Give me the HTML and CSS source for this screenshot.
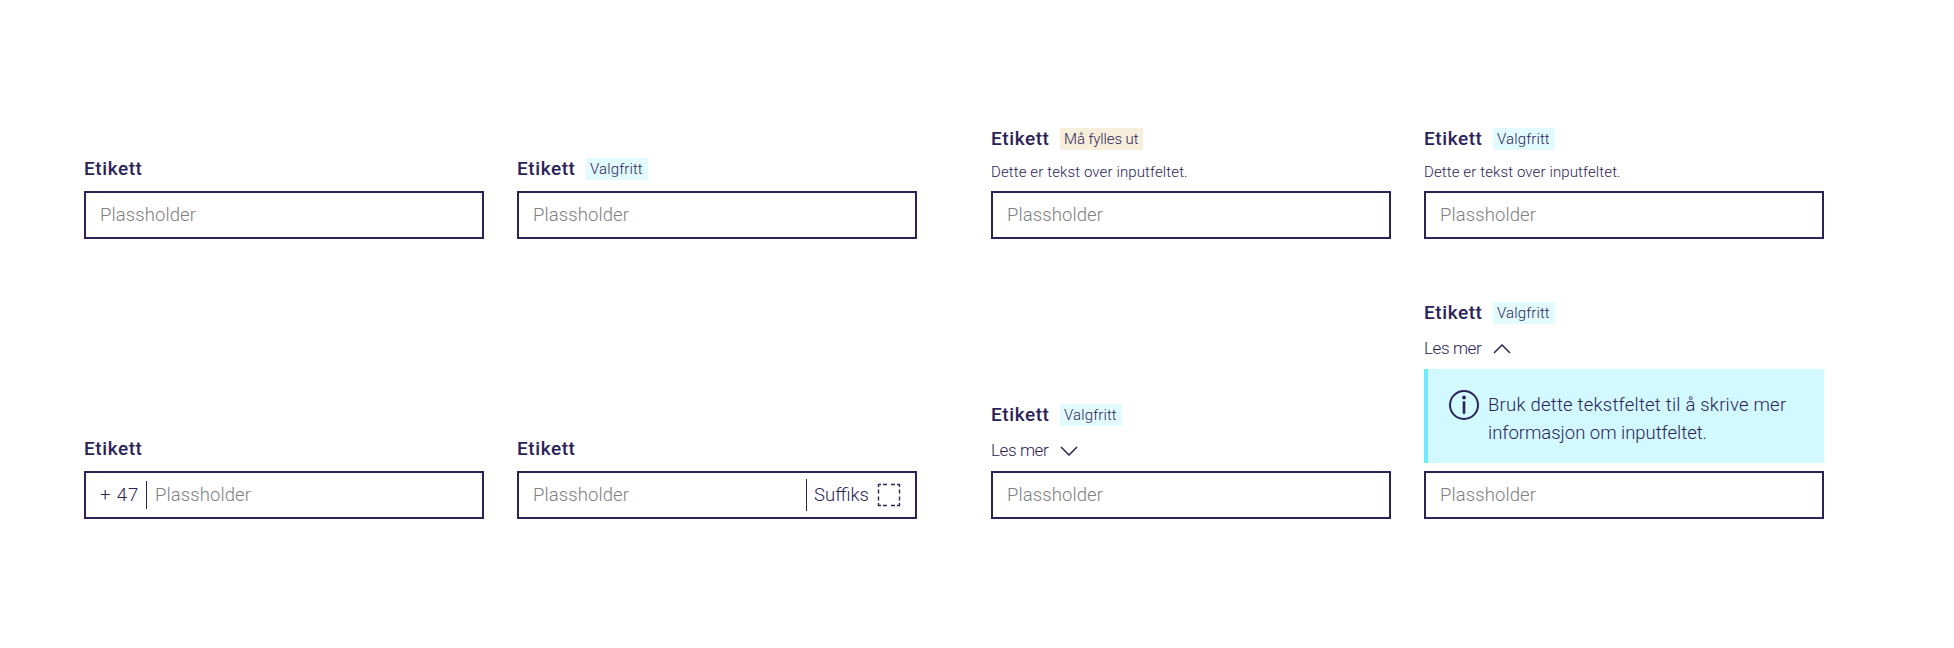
FILE: index.html
```
<!DOCTYPE html>
<html lang="nb">
<head>
<meta charset="utf-8">
<title>Inputfelt</title>
<link rel="stylesheet" href="styles.css">
</head>
<body>
<main class="board">
  <section class="group">
    <div class="field">
      <div class="head"><label class="label">Etikett</label></div>
      <div class="input"><span class="placeholder">Plassholder</span></div>
    </div>
    <div class="field">
      <div class="head"><label class="label">Etikett</label><span class="tag">Valgfritt</span></div>
      <div class="input"><span class="placeholder">Plassholder</span></div>
    </div>
    <div class="field">
      <div class="head"><label class="label">Etikett</label></div>
      <div class="input"><span class="prefix">+ 47</span><span class="placeholder">Plassholder</span></div>
    </div>
    <div class="field">
      <div class="head"><label class="label">Etikett</label></div>
      <div class="input"><span class="placeholder">Plassholder</span><span class="suffix"><span class="suffix-text">Suffiks</span>
        <svg class="slot" viewBox="0 0 24 24"><path d="M1.5 4V1.5H4M20 1.5H22.5V4M22.5 20V22.5H20M4 22.5H1.5V20M6 1.5h4M14 1.5h4M6 22.5h4M14 22.5h4M1.5 6.500v4M1.5 13.500v4M22.500 6.500v4M22.500 13.500v4"/></svg></span></div>
    </div>
  </section>
  <section class="group">
    <div class="field">
      <div class="head"><label class="label">Etikett</label><span class="tag tag-required">Må fylles ut</span></div>
      <p class="description">Dette er tekst over inputfeltet.</p>
      <div class="input"><span class="placeholder">Plassholder</span></div>
    </div>
    <div class="field">
      <div class="head"><label class="label">Etikett</label><span class="tag">Valgfritt</span></div>
      <p class="description">Dette er tekst over inputfeltet.</p>
      <div class="input"><span class="placeholder">Plassholder</span></div>
    </div>
    <div class="field">
      <div class="head"><label class="label">Etikett</label><span class="tag">Valgfritt</span></div>
      <div class="more"><span class="more-text">Les mer</span><svg class="chevron" viewBox="0 0 18 10"><path d="M1 1l8 8 8-8"/></svg></div>
      <div class="input"><span class="placeholder">Plassholder</span></div>
    </div>
    <div class="field">
      <div class="head"><label class="label">Etikett</label><span class="tag">Valgfritt</span></div>
      <div class="more"><span class="more-text">Les mer</span><svg class="chevron" viewBox="0 0 18 10"><path d="M1 9l8-8 8 8"/></svg></div>
      <div class="info">
        <svg class="info-icon" viewBox="0 0 30 30"><circle class="ring" cx="15" cy="15" r="14"/><circle cx="15" cy="7.500" r="1.900"/><path d="M13.700 11.300h2.600v12.500h-2.600z"/></svg>
        <p class="info-text"><span class="line-one">Bruk dette tekstfeltet til å skrive mer</span><br><span class="line-two">informasjon om inputfeltet.</span></p>
      </div>
      <div class="input"><span class="placeholder">Plassholder</span></div>
    </div>
  </section>
</main>
</body>
</html>
```
FILE: styles.css
```
* { box-sizing: border-box; }
body {
  margin: 0;
  background: #fff;
  color: #2b2358;
  font-family: Roboto, "Liberation Sans", sans-serif;
  font-weight: 300;
}
p { margin: 0; }
.board {
  display: flex;
  gap: 74px;
  padding: 0 0 0 84px;
}
.group {
  display: grid;
  grid-template-columns: 400px 400px;
  grid-template-rows: 239px 280px;
  column-gap: 33px;
  align-items: end;
}
.field { display: flex; flex-direction: column; }
.head {
  display: flex;
  align-items: center;
  height: 22px;
  margin-bottom: 11px;
}
.label {
  width: 69px;
  font-size: 19px;
  font-weight: 500;
  letter-spacing: 0.58px;
  line-height: 22px;
  white-space: nowrap;
}
.tag {
  width: 62px;
  height: 22px;
  padding-left: 4px;
  background: #e2fbff;
  font-size: 15px;
  letter-spacing: 0.12px;
  line-height: 22px;
  white-space: nowrap;
}
.tag-required { width: 83px; background: #f8eedc; letter-spacing: -0.1px; }
.description {
  height: 30px;
  padding-top: 1px;
  font-size: 15px;
  letter-spacing: 0.12px;
  line-height: 20px;
}
.more {
  display: flex;
  align-items: center;
  gap: 12px;
  height: 34px;
  padding-bottom: 8px;
}
.more-text {
  width: 57px;
  font-size: 17px;
  letter-spacing: -0.4px;
  line-height: 24px;
  white-space: nowrap;
}
.chevron {
  width: 18px;
  height: 10px;
  margin-top: 2px;
  fill: none;
  stroke: #2b2358;
  stroke-width: 1.5;
}
.input {
  display: flex;
  align-items: center;
  height: 48px;
  padding: 0 14px;
  border: 2px solid #2b2358;
  font-size: 18.5px;
}
.placeholder { color: #808080; letter-spacing: 0.1px; }
.prefix {
  width: 47px;
  height: 28px;
  margin-right: 8px;
  border-right: 1px solid #2b2358;
  letter-spacing: 0.9px;
  line-height: 28px;
}
.suffix {
  display: flex;
  align-items: center;
  justify-content: space-between;
  width: 95px;
  height: 32px;
  margin-left: auto;
  padding-left: 7px;
  border-left: 1px solid #2b2358;
}
.slot { width: 24px; height: 24px; fill: none; stroke: #2b2358; stroke-width: 1.4; }
.info {
  display: flex;
  gap: 9px;
  height: 94px;
  margin-bottom: 8px;
  padding: 21px 0 0 21px;
  border-left: 4px solid #71e9ff;
  background: #d1f9ff;
}
.info-icon { width: 30px; height: 30px; fill: #2b2358; }
.ring { fill: none; stroke: #2b2358; stroke-width: 2; }
.info-text {
  padding-top: 1px;
  font-size: 18.5px;
  line-height: 28px;
  white-space: nowrap;
}
.line-one { letter-spacing: 0.22px; }
.line-two { letter-spacing: -0.02px; }
```
